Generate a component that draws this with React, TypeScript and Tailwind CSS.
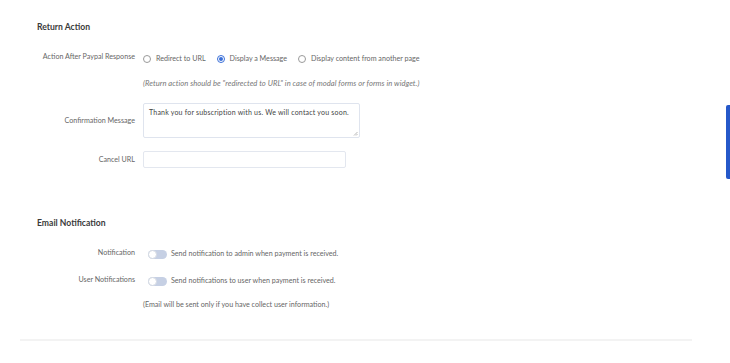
import React from "react";

function Radio({ checked, label }: { checked?: boolean; label: string }) {
  return (
    <label className="flex items-center gap-[5px]">
      <span
        className={
          checked
            ? "w-[8px] h-[8px] rounded-full border border-[#3a6fd8] flex items-center justify-center"
            : "w-[8px] h-[8px] rounded-full border border-[#9a9a9a]"
        }
      >
        {checked && <span className="w-[4px] h-[4px] rounded-full bg-[#3a6fd8]" />}
      </span>
      <span>{label}</span>
    </label>
  );
}

function Toggle() {
  return (
    <span className="relative w-[19px] h-[9px] rounded-full bg-[#c6d0e4] shrink-0">
      <span className="absolute left-0 top-0 w-[9px] h-[9px] rounded-full bg-white border border-[#d4d9e2]" />
    </span>
  );
}

function Row({ label, children, className = "" }: { label: string; children: React.ReactNode; className?: string }) {
  return (
    <div className={"flex items-center " + className}>
      <div className="w-[135px] text-right shrink-0">{label}</div>
      <div className="ml-[8px] flex items-center">{children}</div>
    </div>
  );
}

export default function App() {
  return (
    <div
      className="relative w-[730px] h-[363px] bg-white overflow-hidden text-[7.15px] leading-[10px] text-[#666]"
      style={{ fontFamily: 'Lato, "Noto Sans", sans-serif' }}
    >
      <div className="pt-[22px]">
        <h2 className="pl-[37px] text-[8.6px] leading-[10px] font-bold text-[#3a3a3a]">Return Action</h2>

        <Row label="Action After Paypal Response" className="mt-[19px] h-[12px]">
          <div className="flex items-center gap-[11px] pt-[3px]">
            <Radio label="Redirect to URL" />
            <Radio checked label="Display a Message" />
            <Radio label="Display content from another page" />
          </div>
        </Row>

        <div className="mt-[15px] ml-[143px] italic text-[7.6px] tracking-[0.05px] text-[#777]">
          (Return action should be "redirected to URL" in case of modal forms or forms in widget.)
        </div>

        <Row label="Confirmation Message" className="mt-[15px]">
          <div className="w-[217px] h-[35px] rounded-[2px] border border-[#dfe4ee] px-[5px] py-[3px] text-[7px] text-[#444] tracking-[0.2px] whitespace-nowrap relative">
            Thank you for subscription with us. We will contact you soon.
            <svg className="absolute right-[1px] bottom-[1px]" width="5" height="5" viewBox="0 0 5 5">
              <path d="M4.5 1 L1 4.5 M4.5 3 L3 4.5" stroke="#888" strokeWidth="0.6" />
            </svg>
          </div>
        </Row>

        <Row label="Cancel URL" className="mt-[13px]">
          <div className="w-[203px] h-[17px] rounded-[2px] border border-[#e3e7ef]" />
        </Row>

        <h2 className="mt-[50px] pl-[37px] text-[8.6px] leading-[10px] font-bold text-[#3a3a3a]">Email Notification</h2>

        <Row label="Notification" className="mt-[20px] h-[10px]">
          <div className="flex items-center gap-[4px] ml-[5px] pt-[2px]">
            <Toggle />
            <span>Send notification to admin when payment is received.</span>
          </div>
        </Row>

        <Row label="User Notifications" className="mt-[17px] h-[10px]">
          <div className="flex items-center gap-[4px] ml-[5px] pt-[2px]">
            <Toggle />
            <span>Send notifications to user when payment is received.</span>
          </div>
        </Row>

        <div className="mt-[15px] ml-[143px]">(Email will be sent only if you have collect user information.)</div>

        <div className="mt-[29px] ml-[20px] w-[672px] h-[2px] bg-[#f3f3f3]" />
      </div>

      <div className="absolute right-0 top-[105px] w-[4px] h-[74px] rounded-l-[2px] bg-[#2558c9]" />
    </div>
  );
}
